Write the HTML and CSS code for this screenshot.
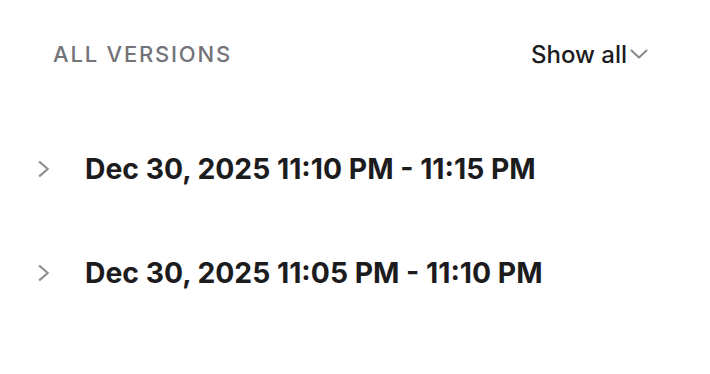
FILE: index.html
```html
<!DOCTYPE html>
<html>
<head>
<meta charset="utf-8">
<link rel="stylesheet" href="styles.css">
</head>
<body>
<div class="panel">
  <div class="header">
    <div class="title">ALL VERSIONS</div>
    <button class="show-all">Show all<svg class="chev-down" width="18" height="10" viewBox="0 0 18 10"><path d="M1.5 1.5 L9 8.5 L16.5 1.5" fill="none" stroke="#86868c" stroke-width="2" stroke-linecap="round" stroke-linejoin="round"/></svg></button>
  </div>
  <ul class="versions">
    <li class="version">
      <svg class="chev-right" width="12" height="16" viewBox="0 0 12 16"><path d="M1.8 1.2 L9.8 8 L1.8 14.8" fill="none" stroke="#8e8e93" stroke-width="2.2" stroke-linecap="round" stroke-linejoin="round"/></svg>
      <span class="label">Dec 30, 2025 11:10 PM - 11:15 PM</span>
    </li>
    <li class="version">
      <svg class="chev-right" width="12" height="16" viewBox="0 0 12 16"><path d="M1.8 1.2 L9.8 8 L1.8 14.8" fill="none" stroke="#8e8e93" stroke-width="2.2" stroke-linecap="round" stroke-linejoin="round"/></svg>
      <span class="label">Dec 30, 2025 11:05 PM - 11:10 PM</span>
    </li>
  </ul>
</div>
</body>
</html>
```
FILE: styles.css
```css
* { box-sizing: border-box; }
body {
  margin: 0;
  background: #ffffff;
  font-family: Inter, "Noto Sans", sans-serif;
  width: 710px;
  height: 374px;
  overflow: hidden;
}
.panel {
  padding: 38px 62px 0 38px;
}
.header {
  display: flex;
  justify-content: space-between;
  align-items: center;
  padding-left: 15px;
  height: 32px;
}
.title {
  font-size: 22px;
  font-weight: 500;
  letter-spacing: 1.8px;
  color: #737378;
}
.show-all {
  display: flex;
  align-items: center;
  gap: 3px;
  border: 0;
  background: none;
  padding: 0;
  font-family: inherit;
  font-size: 24px;
  font-weight: 500;
  color: #1c1c1e;
}
.versions {
  list-style: none;
  margin: 0;
  padding: 0;
  margin-top: 81px;
  display: flex;
  flex-direction: column;
  gap: 68px;
}
.version {
  display: flex;
  align-items: center;
  height: 36px;
}
.chev-right {
  flex: none;
}
.label {
  margin-left: 35px;
  font-size: 28.3px;
  font-weight: 700;
  color: #1c1c1e;
}
```
